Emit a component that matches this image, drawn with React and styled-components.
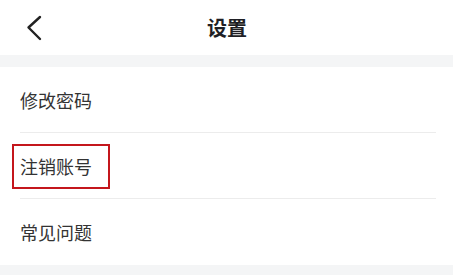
import styled, { createGlobalStyle } from "styled-components";

const Global = createGlobalStyle`
  html, body {
    margin: 0;
    padding: 0;
    background: #ffffff;
  }
  body {
    font-family: "Noto Sans CJK SC", "Noto Sans", sans-serif;
  }
`;

const Page = styled.div`
  width: 453px;
  height: 275px;
  display: flex;
  flex-direction: column;
  background: #ffffff;
  overflow: hidden;
`;

const Header = styled.header`
  height: 55px;
  display: grid;
  grid-template-columns: 60px 1fr 60px;
  align-items: center;
  background: #ffffff;
`;

const BackButton = styled.button`
  border: none;
  background: none;
  padding: 0 0 0 26px;
  height: 55px;
  display: flex;
  align-items: center;
  cursor: pointer;
`;

const Title = styled.h1`
  margin: 0;
  text-align: center;
  font-size: 20px;
  font-weight: 700;
  color: #1f1f24;
  line-height: 1;
  padding-left: 1px;
`;

const Gap = styled.div`
  height: ${(p) => p.$h}px;
  background: #f4f5f6;
  flex-shrink: 0;
`;

const List = styled.ul`
  list-style: none;
  margin: 0;
  padding: 0;
`;

const Row = styled.li`
  height: 66px;
  margin: 0 17px 0 20px;
  display: flex;
  align-items: center;
  border-bottom: ${(p) => (p.$last ? "none" : "1px solid #ececec")};
  box-sizing: border-box;
  font-size: 18px;
  color: #333333;
`;

const Label = styled.span`
  position: relative;
  line-height: 1;
`;

const Highlight = styled.span`
  position: absolute;
  left: -8px;
  top: -13px;
  width: 98px;
  height: 45px;
  border: 2px solid #c4161c;
  box-sizing: border-box;
`;

const items = [
  { id: 1, name: "修改密码" },
  { id: 2, name: "注销账号", marked: true },
  { id: 3, name: "常见问题" },
];

const App = () => {
  return (
    <Page>
      <Global />
      <Header>
        <BackButton aria-label="返回">
          <svg width="16" height="26" viewBox="0 0 16 26">
            <polyline
              points="14,2 2.5,12.5 14,24"
              fill="none"
              stroke="#222"
              strokeWidth="2.4"
              strokeLinecap="round"
              strokeLinejoin="round"
            />
          </svg>
        </BackButton>
        <Title>设置</Title>
        <div />
      </Header>
      <Gap $h={12} />
      <List>
        {items.map((item, i) => (
          <Row key={item.id} $last={i === items.length - 1}>
            <Label>
              {item.name}
              {item.marked && <Highlight />}
            </Label>
          </Row>
        ))}
      </List>
      <Gap $h={10} />
    </Page>
  );
};

export default App;
